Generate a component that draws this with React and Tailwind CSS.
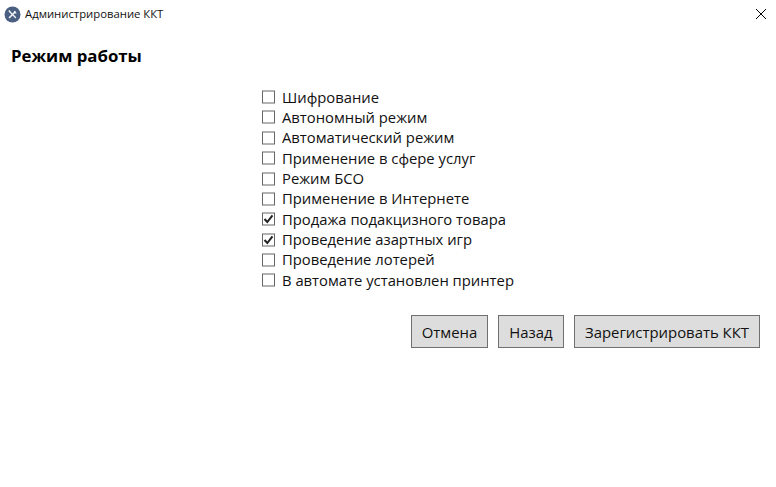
import React from 'react';

const options = [
  ['Шифрование', false, 'h-[19px]'],
  ['Автономный режим', false, 'h-[21px]'],
  ['Автоматический режим', false, 'h-[20px]'],
  ['Применение в сфере услуг', false, 'h-[21px]'],
  ['Режим БСО', false, 'h-[20px]'],
  ['Применение в Интернете', false, 'h-[20px]'],
  ['Продажа подакцизного товара', true, 'h-[21px]'],
  ['Проведение азартных игр', true, 'h-[20px]'],
  ['Проведение лотерей', false, 'h-[20px]'],
  ['В автомате установлен принтер', false, 'h-[21px]'],
];

const App = () => {
  return (
    <div className="w-[776px] h-[487px] bg-white overflow-hidden flex flex-col text-black font-['Open_Sans','Noto_Sans',sans-serif]">
      {/* title bar */}
      <div className="h-[28px] flex items-center pl-[4px] shrink-0">
        <svg width="17" height="17" viewBox="0 0 17 17">
          <circle cx="8.5" cy="8.5" r="8" fill="#4a5f82" />
          <path d="M5.5 5.5 L11.5 11.5" stroke="#f2f4f7" strokeWidth="1.4" strokeLinecap="round" />
          <path d="M4.3 4.8 L5.5 3.9 L6.5 5.4 L5.5 6.3 Z" fill="#f2f4f7" />
          <path d="M11 6 L5.5 11.5" stroke="#f2f4f7" strokeWidth="1.6" strokeLinecap="round" />
          <path d="M10 4.8 A2 2 0 0 0 12.7 7.3 L11.6 6.1 L11.2 5.2 Z" fill="#f2f4f7" />
        </svg>
        <span className="ml-[4px] text-[11.3px] text-[#111]">Администрирование ККТ</span>
        <svg className="ml-auto mr-[10px]" width="10" height="10" viewBox="0 0 10 10">
          <path d="M0 0 L10 10 M10 0 L0 10" stroke="#000" strokeWidth="1" />
        </svg>
      </div>

      <h1 className="mt-[16px] ml-[11px] text-[16.8px] leading-[24px] font-bold">Режим работы</h1>

      <div className="mt-[20px] ml-[262px] flex flex-col">
        {options.map(([label, checked, height]) => (
          <label key={label} className={`${height} flex items-center`}>
            <span className="w-[13px] h-[13px] border border-[#666] bg-white flex items-center justify-center shrink-0 -translate-y-[0.5px]">
              {checked && (
                <svg width="11" height="11" viewBox="0 0 11 11">
                  <path d="M1.5 5.5 L4.3 8.5 L9.5 1.8" fill="none" stroke="#222" strokeWidth="2" />
                </svg>
              )}
            </span>
            <span className="ml-[7px] -mt-[2px] text-[14.8px] leading-[20px] whitespace-nowrap text-[#111]">{label}</span>
          </label>
        ))}
      </div>

      <div className="mt-[24px] mr-[16px] flex justify-end gap-[10px]">
        <button className="h-[33px] w-[77px] pt-[2px] bg-[#dddddd] border border-[#707070] text-[14.9px] text-[#111]">Отмена</button>
        <button className="h-[33px] w-[66px] pt-[2px] bg-[#dddddd] border border-[#707070] text-[14.9px] text-[#111]">Назад</button>
        <button className="h-[33px] w-[186px] pt-[2px] bg-[#dddddd] border border-[#707070] text-[14.9px] text-[#111]">Зарегистрировать ККТ</button>
      </div>
    </div>
  );
};

export default App;
